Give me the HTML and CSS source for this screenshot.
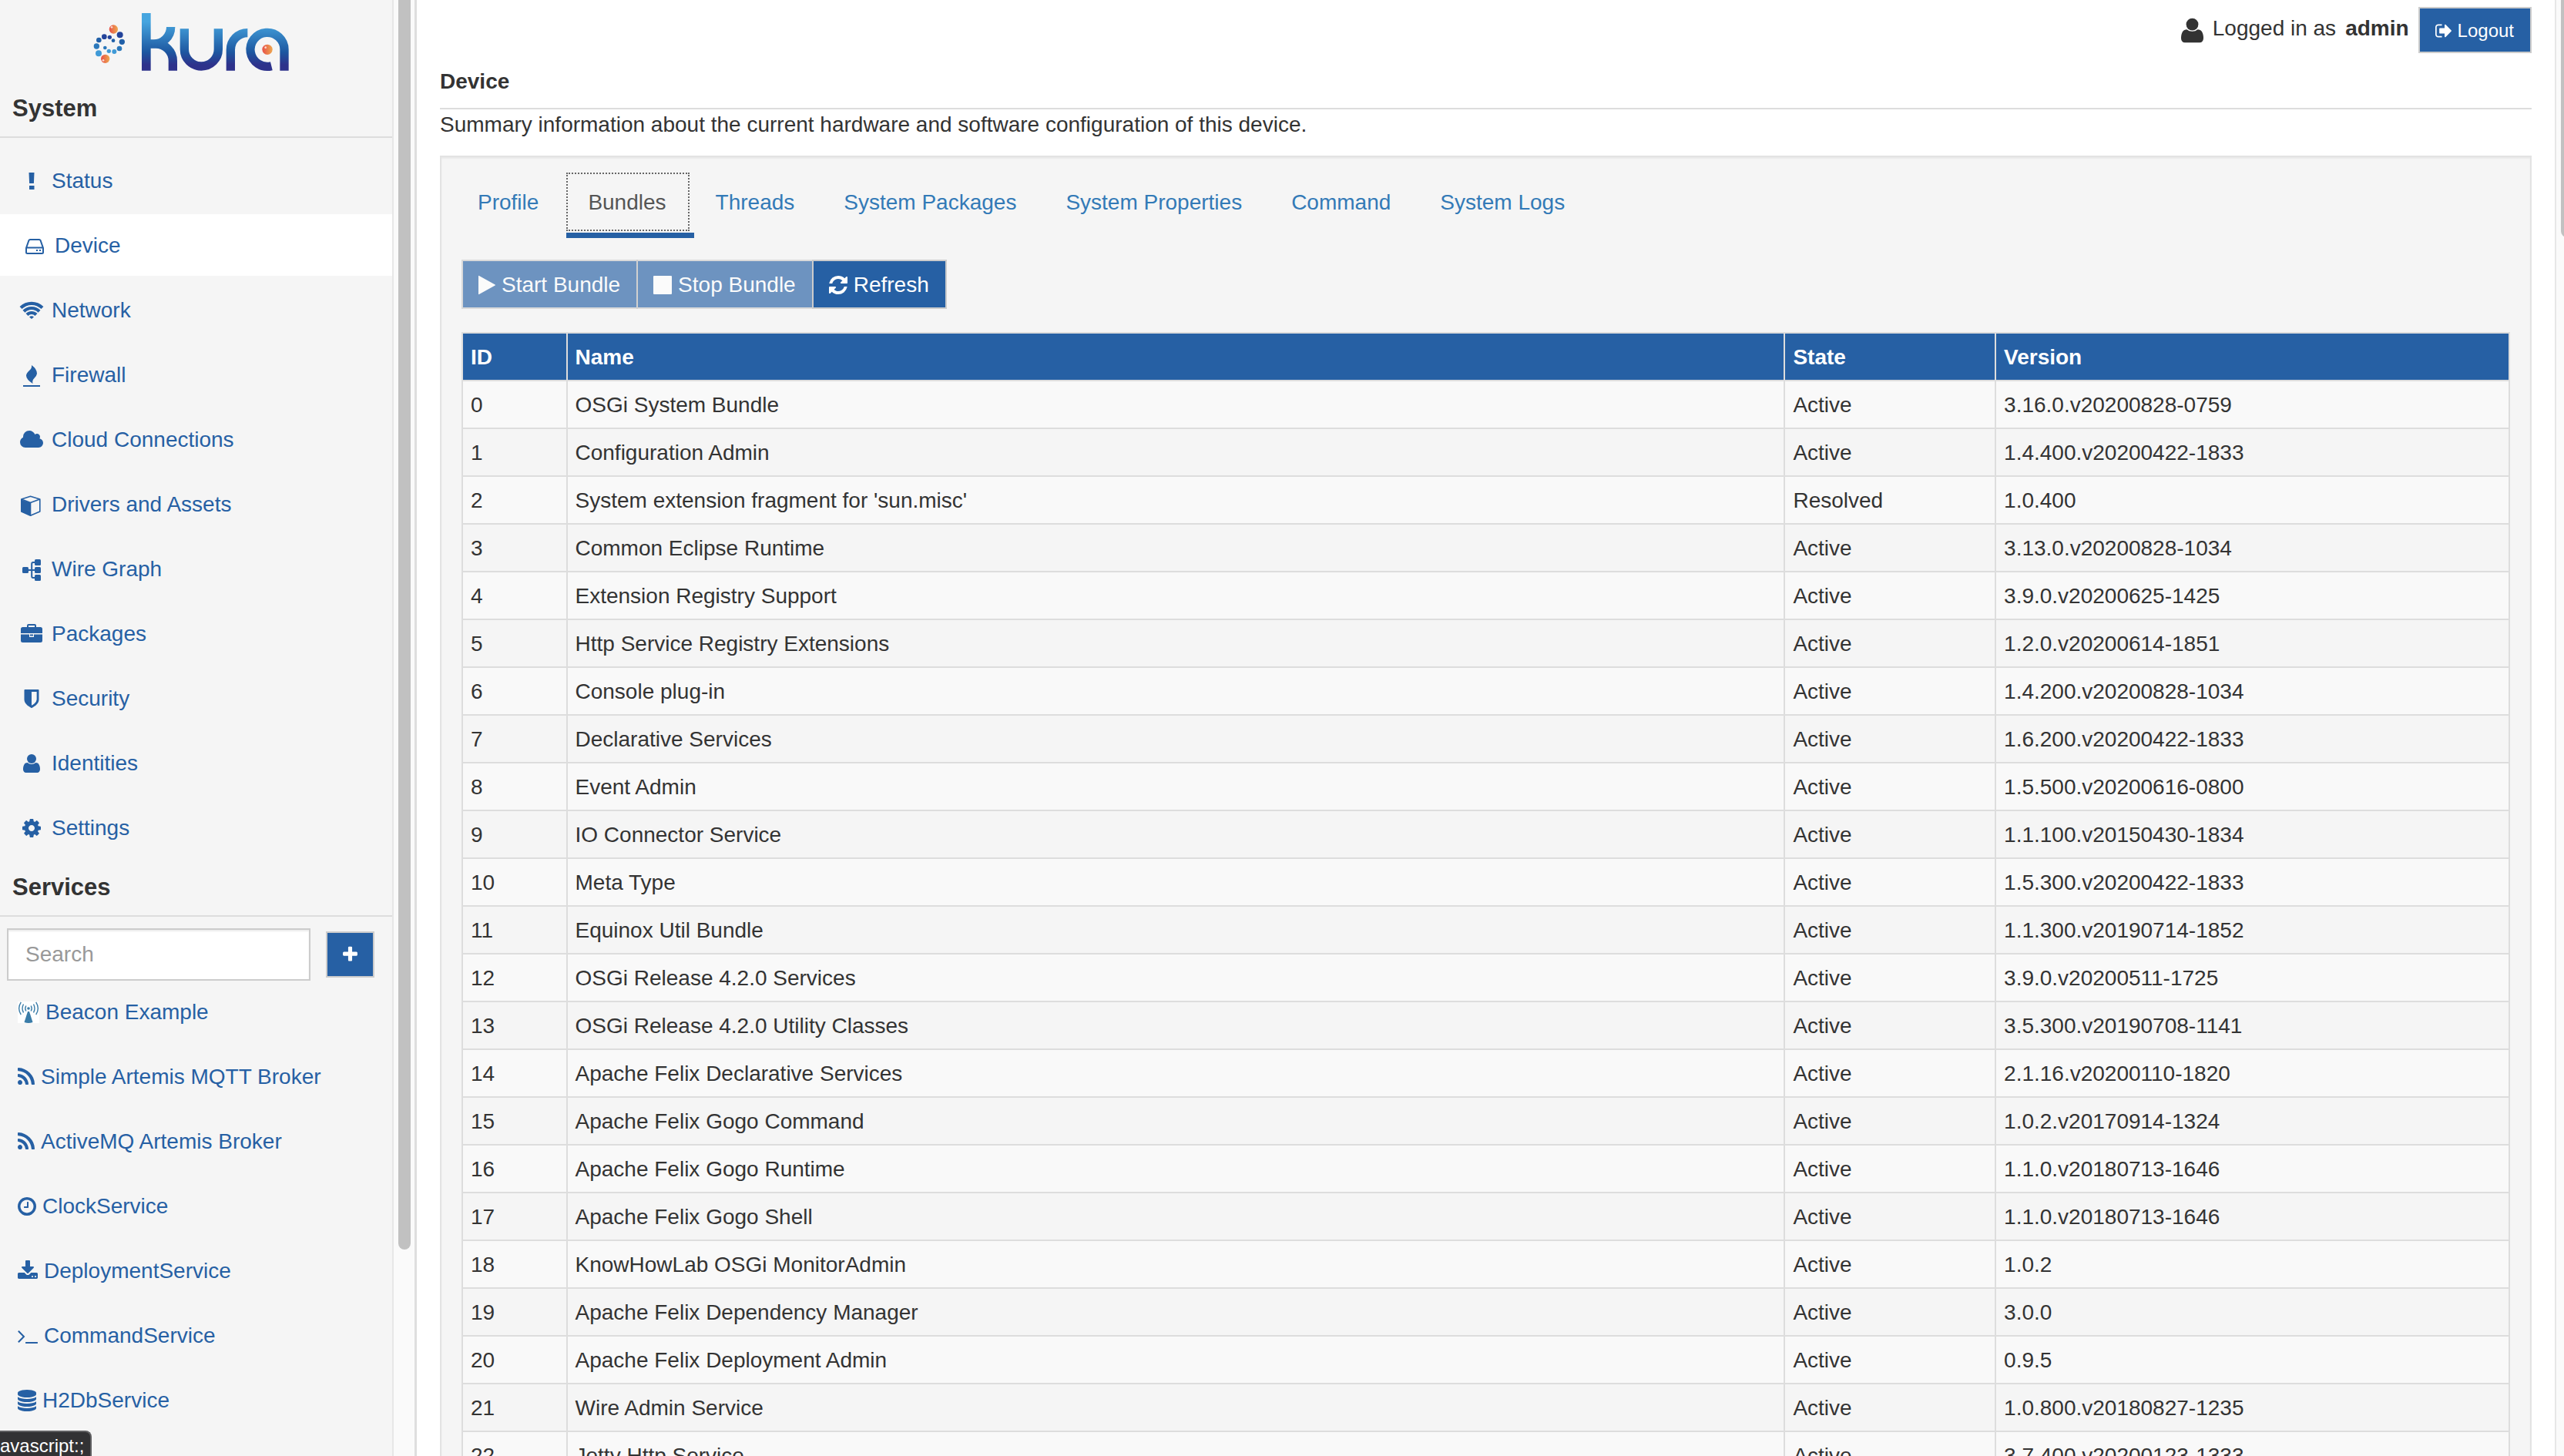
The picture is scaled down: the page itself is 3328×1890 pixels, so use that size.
FILE: index.html
```html
<!DOCTYPE html>
<html lang="en">
<head>
<meta charset="utf-8">
<title>Kura - Device</title>
<link rel="stylesheet" href="styles.css">
</head>
<body>
<div class="app">
  <aside class="sidebar">
    <div class="sidebar-content">
      <div class="logo">
        <svg width="280" height="90" viewBox="13 0 840 270" role="img" aria-label="Kura">
          <defs>
            <linearGradient id="brand" gradientUnits="userSpaceOnUse" x1="0" y1="21" x2="0" y2="245">
              <stop offset="0.15" stop-color="#46a5df"/><stop offset="0.68" stop-color="#1d57a0"/><stop offset="0.9" stop-color="#2e328b"/>
            </linearGradient>
            <linearGradient id="orb"><stop offset="0.1" stop-color="#e8594a"/><stop offset="0.9" stop-color="#eda04e"/></linearGradient>
          </defs>
          <g fill="none" stroke="url(#brand)" stroke-width="34">
            <path d="M237 21.500V245.500M238 21V245M250 141H265A66 66 0 0 0 333 75M250 141H275A66 66 0 0 1 341 207V245"/>
            <path d="M386 82V162A66 66 0 0 0 518 162V82"/>
            <path d="M566 245V164A66 66 0 0 1 632 98"/>
            <path d="M775 245V163A66 66 0 1 0 725 227"/>
          </g>
          <g fill="url(#orb)"><circle cx="709" cy="163" r="20"/><circle cx="110" cy="84" r="17"/><circle cx="78" cy="199" r="17"/></g>
          <g fill="#fbd9cf"><circle cx="702" cy="155" r="4"/><circle cx="103" cy="76" r="4"/><circle cx="70" cy="205" r="4"/></g>
          <g fill="#23439a"><circle cx="135" cy="106" r="12"/><circle cx="74" cy="113" r="10"/><circle cx="95" cy="115" r="8"/></g>
          <g fill="#2160a8"><circle cx="143" cy="133" r="11"/><circle cx="109" cy="128" r="7"/><circle cx="53" cy="126" r="10"/></g>
          <g fill="#2b78bb"><circle cx="44" cy="150" r="11"/><circle cx="77" cy="156" r="7"/><circle cx="133" cy="159" r="10"/></g>
          <g fill="#3f9ad7"><circle cx="52" cy="178" r="12"/><circle cx="92" cy="169" r="8"/><circle cx="113" cy="171" r="9"/></g>
        </svg>
      </div>
      <h2 class="side-title">System</h2>
      <nav class="nav" aria-label="System">
        <a class="nav-link" href="#status"><svg class="fw" viewBox="0 0 36 28"><path d="M14.500 3h7l-.6 14h-5.800zM15 20h6.500v5H15z"/></svg>Status</a>
        <a class="nav-link active" href="#device" aria-current="page"><svg class="fw" viewBox="0 0 36 28"><path d="M7 17V22.500Q7 24 8.500 24H27.500Q29 24 29 22.500V17L25.500 7Q25 6 24 6H12Q11 6 10.500 7ZM7 16.500H29" fill="none" stroke="currentColor" stroke-width="2"/><path d="M20 19h2v2h-2zM24 19h2v2h-2z"/></svg>Device</a>
        <a class="nav-link" href="#network"><svg class="fw" viewBox="0 0 36 28"><g fill="none" stroke="currentColor" stroke-width="4.200"><path d="M4 10.500Q10 4.800 18 4.800T32 10.500M8 15.200Q12 11 18 11T28 15.200M12 19.500Q14.500 17 18 17T24 19.500"/></g><path d="M15 22.500Q18 20 21 22.500L18 25z"/></svg>Network</a>
        <a class="nav-link" href="#firewall"><svg class="fw" viewBox="0 0 36 28"><path d="M18 1Q25 6 25 12Q24.500 15.500 21 18.500Q18.500 21 19.500 25Q11 19.500 11 14.500Q11 11.500 15.500 7.500Q18.500 5 18 1ZM7 27h22v2H7z"/></svg>Firewall</a>
        <a class="nav-link" href="#cloud"><svg class="fw" viewBox="-256 0 2304 1792"><path d="M1856 1152q0 159-112.500 271.500t-271.500 112.500h-1088q-185 0-316.500-131.500t-131.500-316.500q0-132 71-241.500t187-163.500q-2-28-2-43 0-212 150-362t362-150q158 0 286.500 88t187.500 230q70-62 166-62 106 0 181 75t75 181q0 75-41 138 129 30 213 134.500t84 239.500z"/></svg>Cloud Connections</a>
        <a class="nav-link" href="#drivers"><svg class="fw" viewBox="0 0 36 28"><path d="M4.800 7L16.500 3.200L28.800 7V23L16.500 28.200L4.800 23ZM4.800 7L16.500 11.500L28.800 7" fill="none" stroke="currentColor" stroke-width="1.600" stroke-linejoin="round"/><path d="M4.500 7.500L17.300 12V28.500L4.500 23z"/></svg>Drivers and Assets</a>
        <a class="nav-link" href="#wires"><svg class="fw" viewBox="0 0 36 28"><path d="M10 15H26M23 5H20Q18.200 5 18.200 7V23Q18.200 25 20 25H23" fill="none" stroke="currentColor" stroke-width="2"/><rect x="6" y="11" width="8" height="8" rx="1.500"/><rect x="22" y="1" width="8" height="8" rx="1.500"/><rect x="22" y="11" width="8" height="8" rx="1.500"/><rect x="22" y="21" width="8" height="8" rx="1.500"/></svg>Wire Graph</a>
        <a class="nav-link" href="#packages"><svg class="fw" viewBox="0 0 36 28"><path d="M13 6V3Q13 2 14 2H22Q23 2 23 3V6" fill="none" stroke="currentColor" stroke-width="2"/><path d="M4 13V7.500Q4 5 6.500 5H29.500Q32 5 32 7.500V13zM4 14.500H15V18H21V14.500H32V22.500Q32 25 29.500 25H6.500Q4 25 4 22.500zM16 14.500h4v2h-4z"/></svg>Packages</a>
        <a class="nav-link" href="#security"><svg class="fw" viewBox="-256 0 2304 1792"><path d="M1344 960v-640h-448v1137q119-63 213-137 235-184 235-360zm192-768v768q0 86-33.500 170.500t-83 150-118 127.500-126.500 103-121 77.500-89.500 49.500-42.500 20q-12 6-26 6t-26-6q-16-7-42.500-20t-89.500-49.500-121-77.500-126.500-103-118-127.500-83-150-33.500-170.500v-768q0-26 19-45t45-19h1152q26 0 45 19t19 45z" transform="translate(45 0) scale(.95 1)"/></svg>Security</a>
        <a class="nav-link" href="#identities"><svg class="fw" viewBox="-256 0 2304 1792"><path d="M1536 1399q0 109-62.500 187t-150.500 78h-854q-88 0-150.500-78t-62.500-187q0-85 8.500-160.500t31.500-152 58.500-131 94-89 134.500-34.500q131 128 313 128t313-128q76 0 134.500 34.500t94 89 58.500 131 31.500 152 8.500 160.500z" transform="translate(-90 0) scale(1.100 1)"/><circle cx="896" cy="512" r="384"/></svg>Identities</a>
        <a class="nav-link" href="#settings"><svg class="fw" viewBox="-256 0 2304 1792"><path d="M1152 896q0-106-75-181t-181-75-181 75-75 181 75 181 181 75 181-75 75-181zm512-109v222q0 12-8 23t-20 13l-185 28q-19 54-39 91 35 50 107 138 10 12 10 25t-9 23q-27 37-99 108t-94 71q-12 0-26-9l-138-108q-44 23-91 38-16 136-29 186-7 28-36 28h-222q-14 0-24.500-8.500t-11.500-21.500l-28-184q-49-16-90-37l-141 107q-10 9-25 9-14 0-25-11-126-114-165-168-7-10-7-23 0-12 8-23 15-21 51-66.500t54-70.500q-27-50-41-99l-183-27q-13-2-21-12.500t-8-23.500v-222q0-12 8-23t19-13l186-28q14-46 39-92-40-57-107-138-10-12-10-24 0-10 9-23 26-36 98.500-107.500t94.500-71.500q13 0 26 10l138 107q44-23 91-38 16-136 29-186 7-28 36-28h222q14 0 24.500 8.500t11.500 21.500l28 184q49 16 90 37l142-107q9-9 24-9 13 0 25 10 129 119 165 170 7 8 7 22 0 12-8 23-15 21-51 66.500t-54 70.500q26 50 41 98l183 28q13 2 21 12.500t8 23.500z"/></svg>Settings</a>
      </nav>
      <h2 class="side-title">Services</h2>
      <div class="search-row">
        <input class="search" type="text" placeholder="Search" aria-label="Search">
        <button class="btn btn-add" type="button" aria-label="Add service"><svg width="19" height="24" viewBox="192 0 1408 1792"><path d="M1600 736v192q0 40-28 68t-68 28h-416v416q0 40-28 68t-68 28h-192q-40 0-68-28t-28-68v-416h-416q-40 0-68-28t-28-68v-192q0-40 28-68t68-28h416v-416q0-40 28-68t68-28h192q40 0 68 28t28 68v416h416q40 0 68 28t28 68z"/></svg></button>
      </div>
      <nav class="nav services" aria-label="Services">
        <a class="nav-link" href="#beacon"><svg class="beacon" width="28" height="28" viewBox="0 0 28 28"><path d="M13 13h2L19.500 27Q14 29 8.500 27z"/><circle cx="14" cy="9" r="1.800"/><path d="M10.800 5.500Q8.800 9 10.800 12.500M17.200 5.500Q19.200 9 17.200 12.500M7.500 3.500Q4.500 9 7.500 14.500M20.500 3.500Q23.500 9 20.500 14.500M4.300 .8Q-1 9 4.300 17M23.700 .8Q29 9 23.700 17" fill="none" stroke="currentColor" stroke-width="1.400"/></svg>Beacon Example</a>
        <a class="nav-link" href="#simple-artemis"><svg width="22" height="28" viewBox="192 0 1408 1792"><path id="rss" d="M576 1344q0 80-56 136t-136 56-136-56-56-136 56-136 136-56 136 56 56 136zm512 123q2 28-17 48-18 21-47 21h-135q-25 0-43-16.500t-20-41.500q-22-229-184.500-391.500t-391.500-184.500q-25-2-41.500-20t-16.500-43v-135q0-29 21-47 17-17 43-17h5q160 13 306 80.500t259 181.500q114 113 181.500 259t80.500 306zm512 2q2 27-18 47-18 20-46 20h-143q-26 0-44.500-17.500t-19.500-42.500q-12-215-101-408.500t-231.500-336-336-231.500-408.500-102q-25-1-42.500-19.500t-17.500-43.500v-143q0-28 20-46 18-18 44-18h3q262 13 501.500 120t425.500 294q187 186 294 425.500t120 501.500z"/></svg>Simple Artemis MQTT Broker</a>
        <a class="nav-link" href="#activemq-artemis"><svg width="22" height="28" viewBox="192 0 1408 1792"><use href="#rss"/></svg>ActiveMQ Artemis Broker</a>
        <a class="nav-link" href="#clock"><svg width="24" height="28" viewBox="128 0 1536 1792"><path d="M1024 544v448q0 14-9 23t-23 9h-320q-14 0-23-9t-9-23v-64q0-14 9-23t23-9h224v-352q0-14 9-23t23-9h64q14 0 23 9t9 23zm416 352q0-148-73-273t-198-198-273-73-273 73-198 198-73 273 73 273 198 198 273 73 273-73 198-198 73-273zm224 0q0 209-103 385.500t-279.500 279.500-385.500 103-385.500-103-279.500-279.500-103-385.500 103-385.500 279.500-279.500 385.500-103 385.500 103 279.500 279.500 103 385.500z"/></svg>ClockService</a>
        <a class="nav-link" href="#deployment"><svg width="26" height="28" viewBox="64 0 1664 1792"><path d="M1344 1344q0-26-19-45t-45-19-45 19-19 45 19 45 45 19 45-19 19-45zm256 0q0-26-19-45t-45-19-45 19-19 45 19 45 45 19 45-19 19-45zm128-224v320q0 40-28 68t-68 28h-1472q-40 0-68-28t-28-68v-320q0-40 28-68t68-28h465l135 136q58 56 136 56t136-56l136-136h464q40 0 68 28t28 68zm-325-569q17 41-14 70l-448 448q-18 19-45 19t-45-19l-448-448q-31-29-14-70 17-39 59-39h256v-448q0-26 19-45t45-19h256q26 0 45 19t19 45v448h256q42 0 59 39z"/></svg>DeploymentService</a>
        <a class="nav-link" href="#command"><svg width="26" height="28" viewBox="64 0 1664 1792"><path d="M649 983l-466 466q-10 10-23 10t-23-10l-50-50q-10-10-10-23t10-23l393-393-393-393q-10-10-10-23t10-23l50-50q10-10 23-10t23 10l466 466q10 10 10 23t-10 23zm1079 457v64q0 14-9 23t-23 9h-960q-14 0-23-9t-9-23v-64q0-14 9-23t23-9h960q14 0 23 9t9 23z"/></svg>CommandService</a>
        <a class="nav-link" href="#h2db"><svg width="24" height="28" viewBox="128 0 1536 1792"><path d="M896 768q237 0 443-43t325-127v170q0 69-103 128t-280 93.500-385 34.500-385-34.500-280-93.500-103-128v-170q119 84 325 127t443 43zm0 768q237 0 443-43t325-127v170q0 69-103 128t-280 93.500-385 34.500-385-34.500-280-93.500-103-128v-170q119 84 325 127t443 43zm0-384q237 0 443-43t325-127v170q0 69-103 128t-280 93.500-385 34.500-385-34.500-280-93.500-103-128v-170q119 84 325 127t443 43zm0-1152q208 0 385 34.500t280 93.500 103 128v128q0 69-103 128t-280 93.500-385 34.500-385-34.500-280-93.500-103-128v-128q0-69 103-128t280-93.500 385-34.500z"/></svg>H2DbService</a>
      </nav>
    </div>
    <div class="track"><div class="thumb"></div></div>
  </aside>

  <main class="main">
    <header class="topbar">
      <svg class="user" width="29" height="37" viewBox="192 0 1408 1792"><path d="M1536 1399q0 109-62.500 187t-150.500 78h-854q-88 0-150.500-78t-62.500-187q0-85 8.500-160.500t31.500-152 58.500-131 94-89 134.500-34.500q131 128 313 128t313-128q76 0 134.500 34.500t94 89 58.500 131 31.500 152 8.500 160.500z" transform="translate(-90 0) scale(1.100 1)"/><circle cx="896" cy="512" r="384"/></svg>
      <span class="login">Logged in as</span>
      <strong class="login">admin</strong>
      <button class="btn btn-logout" type="button"><svg width="21" height="24" viewBox="64 0 1568 1792"><path d="M704 1440q0 4 1 20t.5 26.500-3 23.500-10 19.500-20.500 6.500h-320q-119 0-203.500-84.500t-84.500-203.500v-704q0-119 84.500-203.500t203.500-84.500h320q13 0 22.500 9.500t9.500 22.500q0 4 1 20t.5 26.500-3 23.500-10 19.500-20.500 6.500h-320q-66 0-113 47t-47 113v704q0 66 47 113t113 47h312l11.500 1 11.500 3 8 5.500 7 9 2 13.500zm928-544q0 26-19 45l-544 544q-19 19-45 19t-45-19-19-45v-288h-448q-26 0-45-19t-19-45v-384q0-26 19-45t45-19h448v-288q0-26 19-45t45-19 45 19l544 544q19 19 19 45z"/></svg>Logout</button>
    </header>
    <h1 class="page-title">Device</h1>
    <p class="summary">Summary information about the current hardware and software configuration of this device.</p>

    <section class="panel">
      <ul class="tabs">
        <li><a href="#profile">Profile</a></li>
        <li class="active"><a href="#bundles">Bundles</a></li>
        <li><a href="#threads">Threads</a></li>
        <li><a href="#system-packages">System Packages</a></li>
        <li><a href="#system-properties">System Properties</a></li>
        <li><a href="#command-tab">Command</a></li>
        <li><a href="#system-logs">System Logs</a></li>
      </ul>
      <div class="btn-group">
        <button class="btn" type="button" disabled><svg width="22" height="28" viewBox="192 0 1408 1792"><path d="M1576 927l-1328 738q-23 13-39.500 3t-16.500-36v-1472q0-26 16.500-36t39.500 3l1328 738q23 13 23 31t-23 31z"/></svg>Start Bundle</button>
        <button class="btn" type="button" disabled><svg width="24" height="28" viewBox="0 0 24 28"><rect y="2" width="24" height="24" rx="1"/></svg>Stop Bundle</button>
        <button class="btn" type="button"><svg width="24" height="28" viewBox="128 0 1536 1792"><path d="M1639 1056q0 5-1 7-64 268-268 434.500t-478 166.500q-146 0-282.500-55t-243.500-157l-129 129q-19 19-45 19t-45-19-19-45v-448q0-26 19-45t45-19h448q26 0 45 19t19 45-19 45l-137 137q71 66 161 102t187 36q134 0 250-65t186-179q11-17 53-117 8-23 30-23h192q13 0 22.500 9.500t9.500 22.500zm25-800v448q0 26-19 45t-45 19h-448q-26 0-45-19t-19-45 19-45l138-138q-148-137-349-137-134 0-250 65t-186 179q-11 17-53 117-8 23-30 23h-199q-13 0-22.500-9.500t-9.500-22.500v-7q65-268 270-434.500t480-166.500q146 0 284 55.500t245 156.500l130-129q19-19 45-19t45 19 19 45z"/></svg>Refresh</button>
      </div>
      <table class="bundles">
        <colgroup><col class="col-id"><col class="col-name"><col class="col-state"><col></colgroup>
        <thead><tr><th>ID</th><th>Name</th><th>State</th><th>Version</th></tr></thead>
        <tbody>
          <tr><td>0</td><td>OSGi System Bundle</td><td>Active</td><td>3.16.0.v20200828-0759</td></tr>
          <tr><td>1</td><td>Configuration Admin</td><td>Active</td><td>1.4.400.v20200422-1833</td></tr>
          <tr><td>2</td><td>System extension fragment for 'sun.misc'</td><td>Resolved</td><td>1.0.400</td></tr>
          <tr><td>3</td><td>Common Eclipse Runtime</td><td>Active</td><td>3.13.0.v20200828-1034</td></tr>
          <tr><td>4</td><td>Extension Registry Support</td><td>Active</td><td>3.9.0.v20200625-1425</td></tr>
          <tr><td>5</td><td>Http Service Registry Extensions</td><td>Active</td><td>1.2.0.v20200614-1851</td></tr>
          <tr><td>6</td><td>Console plug-in</td><td>Active</td><td>1.4.200.v20200828-1034</td></tr>
          <tr><td>7</td><td>Declarative Services</td><td>Active</td><td>1.6.200.v20200422-1833</td></tr>
          <tr><td>8</td><td>Event Admin</td><td>Active</td><td>1.5.500.v20200616-0800</td></tr>
          <tr><td>9</td><td>IO Connector Service</td><td>Active</td><td>1.1.100.v20150430-1834</td></tr>
          <tr><td>10</td><td>Meta Type</td><td>Active</td><td>1.5.300.v20200422-1833</td></tr>
          <tr><td>11</td><td>Equinox Util Bundle</td><td>Active</td><td>1.1.300.v20190714-1852</td></tr>
          <tr><td>12</td><td>OSGi Release 4.2.0 Services</td><td>Active</td><td>3.9.0.v20200511-1725</td></tr>
          <tr><td>13</td><td>OSGi Release 4.2.0 Utility Classes</td><td>Active</td><td>3.5.300.v20190708-1141</td></tr>
          <tr><td>14</td><td>Apache Felix Declarative Services</td><td>Active</td><td>2.1.16.v20200110-1820</td></tr>
          <tr><td>15</td><td>Apache Felix Gogo Command</td><td>Active</td><td>1.0.2.v20170914-1324</td></tr>
          <tr><td>16</td><td>Apache Felix Gogo Runtime</td><td>Active</td><td>1.1.0.v20180713-1646</td></tr>
          <tr><td>17</td><td>Apache Felix Gogo Shell</td><td>Active</td><td>1.1.0.v20180713-1646</td></tr>
          <tr><td>18</td><td>KnowHowLab OSGi MonitorAdmin</td><td>Active</td><td>1.0.2</td></tr>
          <tr><td>19</td><td>Apache Felix Dependency Manager</td><td>Active</td><td>3.0.0</td></tr>
          <tr><td>20</td><td>Apache Felix Deployment Admin</td><td>Active</td><td>0.9.5</td></tr>
          <tr><td>21</td><td>Wire Admin Service</td><td>Active</td><td>1.0.800.v20180827-1235</td></tr>
          <tr><td>22</td><td>Jetty Http Service</td><td>Active</td><td>3.7.400.v20200123-1333</td></tr>
        </tbody>
      </table>
    </section>
  </main>
  <div class="page-track"><div class="page-thumb"></div></div>
  <div class="status-bubble">avascript:;</div>
</div>
</body>
</html>
```
FILE: styles.css
```css
* { box-sizing: border-box; }

body {
  margin: 0;
  background: #fff;
  color: #333;
  font-family: "Liberation Sans", Arial, sans-serif;
  font-size: 28px;
  line-height: 40px;
}

svg { display: block; flex: none; fill: currentColor; overflow: visible; }

.app { position: relative; display: flex; height: 100vh; overflow: hidden; }

/* Sidebar */
.sidebar { display: flex; flex: none; width: 541px; border-right: 3px solid #dedede; background: #f5f5f5; }
.sidebar-content { flex: 1; min-width: 0; overflow: hidden; }
.track { width: 29px; padding-left: 6px; border-left: 2px solid #e7e7e7; background: #fafafa; }
.thumb { width: 16px; height: 85.8%; border-radius: 0 0 8px 8px; background: #c1c1c1; }

.logo { display: flex; justify-content: center; padding: 10px 0 3px; }

.side-title { margin: 0 0 15px; padding: 18px 16px 16px; border-bottom: 2px solid #ddd; font-size: 31px; line-height: 40px; }

.nav { display: flex; flex-direction: column; gap: 4px; }
.nav-link { display: flex; align-items: center; gap: 8px; height: 80px; padding: 2px 0 0 23px; color: #2660a4; text-decoration: none; white-space: nowrap; }
.nav-link.active { padding-left: 27px; background: #fff; }
.fw { width: 36px; height: 28px; }
.beacon { background: #fff; color: #3a7ca8; }

.search-row { display: flex; align-items: center; gap: 20px; padding: 0 23px 0 9px; }
.search { flex: 1; min-width: 0; height: 68px; padding: 0 22px; border: 2px solid #ccc; border-radius: 0; background: #fff; box-shadow: inset 0 2px 2px rgba(0, 0, 0, .075); color: #555; font: inherit; }
.search::placeholder { color: #999; opacity: 1; }

/* Buttons */
.btn { display: inline-flex; align-items: center; gap: 8px; height: 64px; padding: 1px 21px 0 20px; border: 2px solid #ccc; border-radius: 0; background: #2660a4; color: #fff; font: inherit; white-space: nowrap; }
.btn:disabled { opacity: .65; }
.btn-add { flex: none; width: 63px; height: 60px; justify-content: center; padding: 0; }
.btn-logout { height: 60px; font-size: 24px; }
.btn-group { display: flex; margin: 28px 0 30px; }
.btn-group .btn + .btn { margin-left: -2px; }

/* Main column */
.main { flex: 1; min-width: 0; padding: 0 30px; overflow: hidden; }
.topbar { display: flex; align-items: center; justify-content: flex-end; gap: 12px; padding-top: 9px; }
.login { padding-bottom: 4px; }
.page-title { margin: 0; padding: 17px 0 14px; border-bottom: 2px solid #ddd; font-size: 28px; line-height: 40px; }
.summary { margin: 0 0 20px; }

.panel { padding: 20px 26px; border: 2px solid #e3e3e3; background: #f5f5f5; box-shadow: inset 0 2px 2px rgba(0, 0, 0, .05); }

.tabs { display: flex; margin: 0 -7px; padding: 0; list-style: none; }
.tabs li { padding: 0 6px 2px 0; border-bottom: 7px solid transparent; }
.tabs a { display: block; padding: 19px 30px 17px 28px; color: #337ab7; text-decoration: none; white-space: nowrap; }
.tabs .active { border-bottom-color: #2660a4; }
.tabs .active a { color: #555; outline: 2px dotted #666; outline-offset: -2px; }

.bundles { width: 100%; table-layout: fixed; border-collapse: collapse; background: #f5f5f5; }
.col-id { width: 5.1%; }
.col-name { width: 59.5%; }
.col-state { width: 10.3%; }
.bundles th, .bundles td { padding: 11px 10px 9px; border: 2px solid #ddd; text-align: left; white-space: nowrap; }
.bundles th { background: #2660a4; color: #fff; }
.bundles tbody tr:nth-child(odd) { background: #f9f9f9; }

.page-track { flex: none; width: 12px; padding-left: 6px; border-left: 2px solid #e7e7e7; background: #fafafa; overflow: hidden; }
.page-thumb { width: 16px; height: 16.3%; border-radius: 0 0 8px 8px; background: #c1c1c1; }

/* Link preview shown by the browser over the page */
.status-bubble { position: absolute; bottom: 0; left: 0; height: 33px; padding-right: 8px; border: solid #606062; border-width: 2px 2px 0 0; border-radius: 0 8px 0 0; background: #323234; color: #fff; font-size: 24px; line-height: 36px; }
```
